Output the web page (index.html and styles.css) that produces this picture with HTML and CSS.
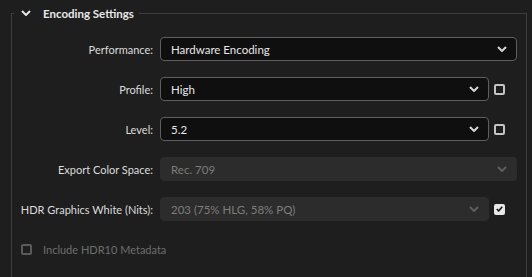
FILE: index.html
```html
<!DOCTYPE html>
<html lang="en">
<head>
  <meta charset="UTF-8" />
  <title>Encoding Settings</title>
  <link rel="stylesheet" href="styles.css">
</head>
<body>

  <fieldset class="section">
    <legend class="section-title">
      <svg class="twisty" width="10" height="6" viewBox="0 0 10 6"><path d="M1 1 L5 5 L9 1" fill="none" stroke="#e6e6e6" stroke-width="2"/></svg>
      <span>Encoding Settings</span>
    </legend>

    <div class="row">
      <label class="label">Performance:</label>
      <div class="select">
        <span>Hardware Encoding</span>
        <svg class="arrow" width="10" height="6" viewBox="0 0 10 6"><path d="M1 1 L5 5 L9 1" fill="none" stroke="currentColor" stroke-width="2"/></svg>
      </div>
    </div>

    <div class="row">
      <label class="label">Profile:</label>
      <div class="select">
        <span>High</span>
        <svg class="arrow" width="10" height="6" viewBox="0 0 10 6"><path d="M1 1 L5 5 L9 1" fill="none" stroke="currentColor" stroke-width="2"/></svg>
      </div>
      <span class="check"></span>
    </div>

    <div class="row">
      <label class="label">Level:</label>
      <div class="select">
        <span>5.2</span>
        <svg class="arrow" width="10" height="6" viewBox="0 0 10 6"><path d="M1 1 L5 5 L9 1" fill="none" stroke="currentColor" stroke-width="2"/></svg>
      </div>
      <span class="check"></span>
    </div>

    <div class="row">
      <label class="label">Export Color Space:</label>
      <div class="select disabled">
        <span>Rec. 709</span>
        <svg class="arrow" width="10" height="6" viewBox="0 0 10 6"><path d="M1 1 L5 5 L9 1" fill="none" stroke="currentColor" stroke-width="2"/></svg>
      </div>
    </div>

    <div class="row">
      <label class="label">HDR Graphics White (Nits):</label>
      <div class="select disabled">
        <span>203 (75% HLG, 58% PQ)</span>
        <svg class="arrow" width="10" height="6" viewBox="0 0 10 6"><path d="M1 1 L5 5 L9 1" fill="none" stroke="currentColor" stroke-width="2"/></svg>
      </div>
      <span class="check checked">
        <svg width="9" height="8" viewBox="0 0 9 8"><path d="M1 4 L3.5 6.5 L8 1" fill="none" stroke="#111" stroke-width="2"/></svg>
      </span>
    </div>

    <div class="option">
      <span class="check off"></span>
      <span>Include HDR10 Metadata</span>
    </div>
  </fieldset>

</body>
</html>
```

FILE: styles.css
```css
* {
  box-sizing: border-box;
}

body {
  margin: 0;
  padding: 7px 5px 0 11px;
  background-color: #1e1e1e;
  font-family: Lato, "Noto Sans", sans-serif;
  font-size: 11px;
  color: #dcdcdc;
  height: 277px;
  overflow: hidden;
}

.section {
  margin: 0;
  padding: 18px 9px 40px 0;
  border: 1px solid #3d3d3d;
  min-width: 0;
}

.section-title {
  display: flex;
  align-items: center;
  gap: 12px;
  margin-left: 2px;
  padding: 0 5px 0 7px;
  font-size: 11.5px;
  font-weight: bold;
  color: #e8e8e8;
  height: 12px;
}

.twisty {
  display: block;
}

.row {
  display: flex;
  align-items: center;
  gap: 7px;
  height: 24px;
  margin-bottom: 16px;
}

.label {
  width: 141px;
  flex-shrink: 0;
  text-align: right;
  white-space: nowrap;
}

.select {
  flex: 1;
  height: 24px;
  display: flex;
  align-items: center;
  justify-content: space-between;
  padding: 0 9px 0 10px;
  background-color: #0f0f0f;
  border: 1px solid #5e5e5e;
  border-radius: 4px;
  font-size: 11.5px;
  color: #e8e8e8;
}

.select .arrow {
  color: #d6d6d6;
}

.select.disabled {
  background-color: #2c2c2c;
  border-color: #2c2c2c;
  color: #7d7d7d;
}

.select.disabled .arrow {
  color: #5e5e5e;
}

.check {
  width: 11px;
  height: 11px;
  margin: 0 12px 0 -2px;
  border: 2px solid #c4c4c4;
  border-radius: 2px;
  flex-shrink: 0;
}

.check.checked {
  background-color: #e8e8e8;
  border-color: #e8e8e8;
  display: flex;
  align-items: center;
  justify-content: center;
}

.check.off {
  border-color: #5a5a5a;
  margin: 0;
}

.option {
  display: flex;
  align-items: center;
  gap: 11px;
  padding-left: 9px;
  margin-top: 22px;
  color: #6e6e6e;
}
```
